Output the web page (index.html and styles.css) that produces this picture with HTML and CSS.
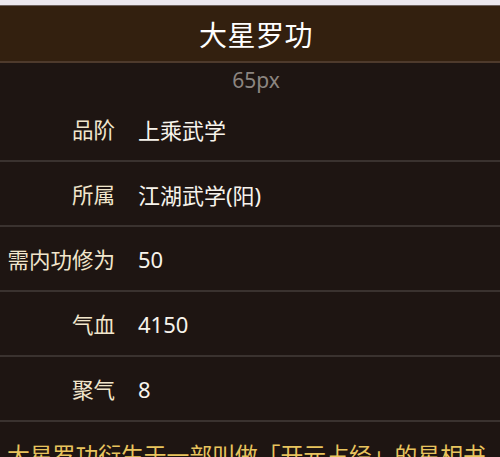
FILE: index.html
```html
<!DOCTYPE html>
<html lang="zh">
<head>
<meta charset="utf-8">
<link rel="stylesheet" href="styles.css">
</head>
<body>
<div class="topbar"></div>
<header class="header"><h1 class="title">大星罗功</h1></header>
<div class="unit">65px</div>
<div class="rows">
  <div class="row"><span class="label">品阶</span><span class="value">上乘武学</span></div>
  <div class="row"><span class="label">所属</span><span class="value">江湖武学(阳)</span></div>
  <div class="row"><span class="label">需内功修为</span><span class="value">50</span></div>
  <div class="row"><span class="label">气血</span><span class="value">4150</span></div>
  <div class="row"><span class="label">聚气</span><span class="value">8</span></div>
</div>
<p class="desc">大星罗功衍生于一部叫做「开元占经」的星相书</p>
</body>
</html>
```
FILE: styles.css
```css
html, body {
  margin: 0;
  padding: 0;
}
body {
  background: #1e1512;
  font-family: "Noto Sans", "Noto Sans CJK SC", sans-serif;
  width: 500px;
  height: 457px;
  overflow: hidden;
}
.topbar {
  height: 5px;
  background: #ece8ee;
  border-bottom: 1px solid #6e625e;
}
.header {
  height: 55px;
  background: #33200f;
  border-bottom: 2px solid #4e3a2c;
  display: flex;
  align-items: center;
  justify-content: center;
  padding-left: 12px;
}
.title {
  margin: 0;
  font-weight: 400;
  font-size: 28px;
  color: #ffffff;
  letter-spacing: 0.5px;
}
.unit {
  height: 34px;
  display: flex;
  align-items: center;
  justify-content: center;
  padding-left: 12px;
  color: #8c8580;
  font-size: 21px;
}
.row {
  height: 63px;
  border-bottom: 2px solid #3a322f;
  display: flex;
  align-items: center;
}
.label {
  width: 115px;
  text-align: right;
  color: #f1e6cc;
  font-size: 21.5px;
  white-space: nowrap;
}
.value {
  margin-left: 23px;
  color: #f7f3ec;
  font-size: 22px;
}
.desc {
  margin: 16px 0 0 7px;
  color: #e8c45e;
  font-size: 22.8px;
  white-space: nowrap;
}
```
